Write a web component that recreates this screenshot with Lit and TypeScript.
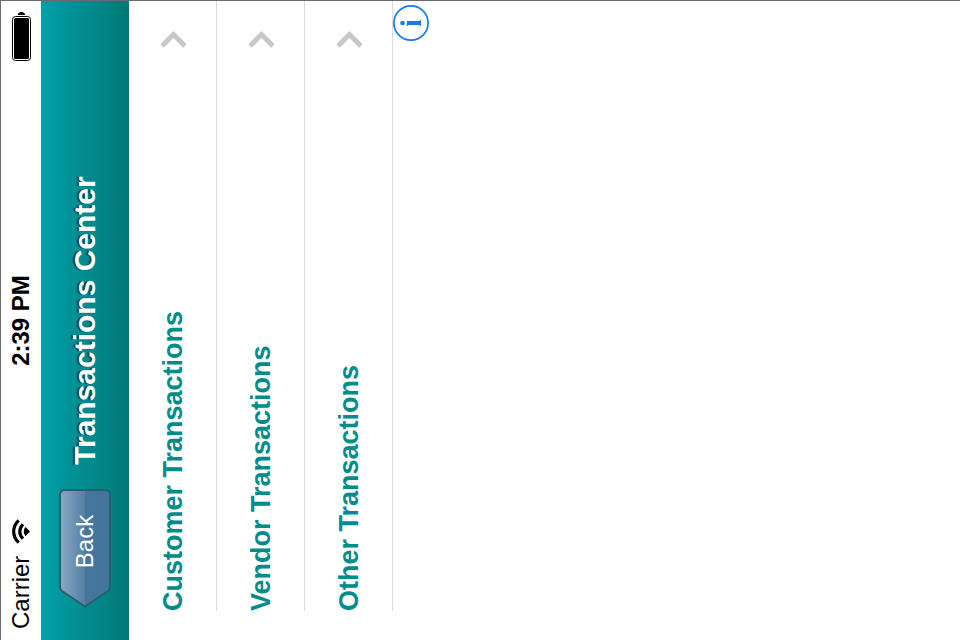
import { LitElement, html, css } from "lit";
import { customElement, property } from "lit/decorators.js";

@customElement("status-bar")
class StatusBar extends LitElement {
  static styles = css`
    :host {
      display: grid;
      grid-template-columns: 1fr auto 1fr;
      align-items: center;
      height: 40px;
      padding: 0 11px;
      background: #fff;
      color: #000;
      font-size: 24px;
      line-height: 28px;
    }
    .carrier {
      display: flex;
      align-items: center;
      gap: 12px;
    }
    .time {
      font-weight: 700;
    }
    .battery {
      justify-self: end;
    }
    svg {
      display: block;
    }
  `;

  render() {
    return html`
      <div class="carrier">
        <span>Carrier</span>
        <svg width="25" height="18" viewBox="0 0 25 18" aria-label="Wi-Fi">
          <g fill="none" stroke="#000" stroke-width="3.2">
            <path d="M1.300 6.700C7.600 0 17.400 0 23.700 6.700" />
            <path d="M5.300 11C9.400 6.700 15.600 6.700 19.700 11" />
          </g>
          <path d="M12.500 18 8 13.600C10.300 11.200 14.700 11.200 17 13.600Z" fill="#000" />
        </svg>
      </div>
      <time class="time">2:39 PM</time>
      <svg class="battery" width="49" height="19" viewBox="0 0 49 19" aria-label="Battery full">
        <rect x=".5" y=".5" width="44" height="18" rx="3" fill="none" stroke="#000" />
        <rect x="2" y="2" width="41" height="15" rx="1.500" fill="#000" />
        <path d="M46 6h1q2 1 2 3.500t-2 3.500h-1z" fill="#000" />
      </svg>
    `;
  }
}

@customElement("nav-bar")
class NavBar extends LitElement {
  @property() heading = "";

  static styles = css`
    :host {
      display: grid;
      grid-template-columns: 1fr auto 1fr;
      align-items: center;
      height: 88px;
      padding: 0 32px;
      background: linear-gradient(#029fa9, #017976);
    }
    .back {
      position: relative;
      justify-self: start;
      width: 119px;
      height: 53px;
      margin: 0;
      padding: 0 0 0 14px;
      border: 0;
      background: none;
      color: #fff;
      font: 24px/28px "Liberation Sans", Arial, sans-serif;
      cursor: pointer;
    }
    .shape {
      position: absolute;
      inset: 0;
    }
    .label {
      position: relative;
    }
    .title {
      margin: 0;
      color: #fff;
      font-size: 30px;
      line-height: 36px;
      font-weight: 700;
      text-shadow: 0 -2px 1px rgba(0, 30, 30, 0.65);
    }
  `;

  render() {
    return html`
      <button class="back" type="button">
        <svg class="shape" width="119" height="53" viewBox="0 0 119 53" aria-hidden="true">
          <defs>
            <linearGradient id="gloss" x1="0" y1="0" x2="0" y2="1">
              <stop offset="0" stop-color="#8aa9c4" />
              <stop offset=".5" stop-color="#557fa6" />
              <stop offset=".5" stop-color="#47769d" />
              <stop offset="1" stop-color="#42749c" />
            </linearGradient>
          </defs>
          <path
            d="M1.500 26 17 3Q18.500 1 21 1H113Q118 1 118 6V46Q118 51 113 51H21Q18.500 51 17 49Z"
            fill="url(#gloss)"
            stroke="#24606f"
            stroke-width="2"
          />
        </svg>
        <span class="label">Back</span>
      </button>
      <h1 class="title">${this.heading}</h1>
    `;
  }
}

@customElement("menu-row")
class MenuRow extends LitElement {
  @property() label = "";

  static styles = css`
    :host {
      display: block;
    }
    .row {
      box-sizing: border-box;
      display: flex;
      align-items: center;
      justify-content: space-between;
      height: 88px;
      padding-right: 30px;
      border-bottom: 1px solid #dcdcdd;
      color: #008c8a;
      font-size: 27px;
      line-height: 34px;
      font-weight: 700;
      text-decoration: none;
    }
    svg {
      display: block;
    }
  `;

  render() {
    return html`
      <a class="row" href="#">
        <span>${this.label}</span>
        <svg width="17" height="26" viewBox="0 0 17 26" aria-hidden="true">
          <path d="M2 2 13.500 13.500 2 25" fill="none" stroke="#c7c7cc" stroke-width="5" />
        </svg>
      </a>
    `;
  }
}

@customElement("app-root")
class AppRoot extends LitElement {
  static styles = css`
    :host {
      display: block;
      height: 100vh;
      overflow: hidden;
      background: #fff;
      font-family: "Liberation Sans", Arial, sans-serif;
    }
    .screen {
      box-sizing: border-box;
      width: 100vh;
      height: 100vw;
      border-top: 1px solid #6b696b;
      border-right: 1px solid #6b696b;
      background: #fff;
      transform-origin: top left;
      transform: rotate(-90deg) translateX(-100%);
    }
    .list {
      display: block;
      padding-left: 29px;
    }
    .footer {
      display: flex;
      justify-content: flex-end;
      padding-right: 4px;
    }
    .info {
      width: 36px;
      height: 36px;
      margin: 0;
      padding: 0;
      border: 0;
      background: none;
      cursor: pointer;
    }
    .info svg {
      display: block;
    }
  `;

  private rows = ["Customer Transactions", "Vendor Transactions", "Other Transactions"];

  render() {
    return html`
      <main class="screen">
        <status-bar></status-bar>
        <nav-bar heading="Transactions Center"></nav-bar>
        <nav class="list">
          ${this.rows.map((label) => html`<menu-row .label=${label}></menu-row>`)}
        </nav>
        <div class="footer">
          <button class="info" type="button" aria-label="Info">
            <svg width="36" height="36" viewBox="0 0 36 36" aria-hidden="true">
              <circle cx="18" cy="18" r="17.100" fill="none" stroke="#127cfb" stroke-width="1.700" />
              <circle cx="18" cy="9.500" r="2.300" fill="#127cfb" />
              <rect x="16" y="14" width="4" height="14" fill="#127cfb" />
              <rect x="15" y="14" width="3" height="1" fill="#127cfb" />
              <rect x="15" y="27" width="6" height="1" fill="#127cfb" />
            </svg>
          </button>
        </div>
      </main>
    `;
  }
}
